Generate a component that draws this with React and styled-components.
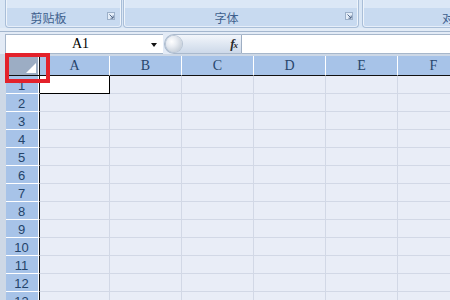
import React from 'react';
import styled, { createGlobalStyle } from 'styled-components';

const Global = createGlobalStyle`
  html, body { margin: 0; padding: 0; background: #cbd7e6; }
  #root { width: 450px; height: 300px; }
`;

const Root = styled.div`
  position: relative;
  width: 450px;
  height: 300px;
  overflow: hidden;
  background: #cdd8e6;
  display: flex;
  flex-direction: column;
`;

const Ribbon = styled.div`
  flex: none;
  display: flex;
  align-items: flex-start;
  height: 32px;
  box-sizing: border-box;
  padding-left: 5px;
  background: linear-gradient(#d9e6f5 0, #d9e6f5 28px, #e2ebf6 28px);
  border-bottom: 1px solid #a3b6ce;
`;

const Group = styled.div`
  flex: none;
  width: ${(p) => p.$w}px;
  margin-right: ${(p) => p.$gap || 0}px;
  height: 28px;
  box-sizing: border-box;
  border: 1px solid #a9bed8;
  border-top: none;
  border-radius: 0 0 4px 4px;
  background: linear-gradient(#dbe7f6 0, #dbe7f6 8px, #c8daf0 8px);
  box-shadow: inset 1px 0 #eef4fb, inset -1px 0 #eef4fb, inset 0 -1px #e6eef9;
  display: flex;
  flex-direction: column;
  justify-content: flex-end;
`;

const Band = styled.div`
  height: 19px;
  display: flex;
  align-items: center;
  padding-bottom: 1px;
  box-sizing: border-box;
`;

const GroupLabel = styled.div`
  flex: 1;
  text-align: ${(p) => p.$align || 'center'};
  padding-left: ${(p) => p.$pl || 0}px;
  padding-right: ${(p) => (p.$align === 'left' ? 0 : 16)}px;
  font: 12px/19px "Noto Sans CJK SC", "Noto Sans", sans-serif;
  color: #3e5f8d;
  white-space: nowrap;
  overflow: hidden;
`;

const LauncherIcon = styled.svg`
  flex: none;
  width: 8px;
  height: 8px;
  margin-right: ${(p) => p.$mr}px;
  margin-bottom: 3px;
`;

const Launcher = ({ mr }) => (
  <LauncherIcon $mr={mr} viewBox="0 0 8 8">
    <rect x="0.5" y="0.5" width="7" height="7" fill="#e4edf8" stroke="#9cb0c9" />
    <path d="M2.5 2.5L6 6" stroke="#53698a" strokeWidth="1" />
    <path d="M3.5 6.2H6.2V3.5" fill="none" stroke="#53698a" strokeWidth="1" />
  </LauncherIcon>
);

const FormulaBar = styled.div`
  flex: none;
  height: 22px;
  box-sizing: border-box;
  display: flex;
  align-items: flex-end;
  padding-left: 5px;
  background: #e3ebf6;
`;

const NameBox = styled.div`
  flex: none;
  width: 158px;
  height: 20px;
  box-sizing: border-box;
  background: #fff;
  border: 1px solid #a7b7cb;
  border-right: none;
  display: flex;
  align-items: center;
`;

const NameText = styled.div`
  flex: 1;
  text-align: center;
  padding-left: 4px;
  font: 14px "Liberation Serif", "DejaVu Serif", serif;
  color: #000;
`;

const DropArrow = styled.div`
  flex: none;
  width: 0;
  height: 0;
  border-left: 3px solid transparent;
  border-right: 3px solid transparent;
  border-top: 4px solid #111;
  margin-right: 6px;
  margin-top: 1px;
`;

const FxPill = styled.div`
  flex: none;
  width: 78px;
  height: 20px;
  box-sizing: border-box;
  margin-left: 1px;
  border: 1px solid #a9b9cd;
  border-right: 1px solid #9eaec3;
  border-radius: 10px 0 0 10px;
  background: linear-gradient(#f3f6fb, #dfe7f2 50%, #cdd9e9);
  display: flex;
  align-items: center;
  justify-content: space-between;
  padding: 0 4px 0 1px;
`;

const Knob = styled.div`
  width: 16px;
  height: 16px;
  border-radius: 50%;
  background: radial-gradient(circle at 35% 35%, #ffffff 0, #e8ecf2 35%, #b4bfcc 100%);
  box-shadow: 0 0 0 1px #b8c4d3;
`;

const Fx = styled.span`
  font: italic bold 13px "Liberation Serif", serif;
  color: #2a2a2a;
  letter-spacing: -1px;
  & > small {
    font-size: 9px;
  }
`;

const FormulaInput = styled.div`
  flex: 1;
  height: 20px;
  box-sizing: border-box;
  background: #fff;
  border-top: 1px solid #a7b7cb;
  border-bottom: 1px solid #a7b7cb;
`;

const Sheet = styled.div`
  flex: 1;
  margin-top: 2px;
  margin-left: 6px;
  display: flex;
  flex-direction: column;
  background: #e9edf7;
`;

const Row = styled.div`
  display: flex;
  flex: none;
`;

const Corner = styled.div`
  flex: none;
  width: 34px;
  height: 20px;
  box-sizing: border-box;
  background: #9cadc4;
  border-right: 1px solid #111;
  border-bottom: 1px solid #111;
  box-shadow: inset -1px 0 #fff;
  display: flex;
  justify-content: flex-end;
  align-items: flex-end;
  padding: 0 3px 2px 0;
`;

const Triangle = styled.div`
  width: 0;
  height: 0;
  border-left: 10px solid transparent;
  border-bottom: 10px solid #fff;
`;

const ColHeader = styled.div`
  flex: none;
  width: ${(p) => p.$w}px;
  height: 20px;
  box-sizing: border-box;
  background: #a7c3e8;
  border-right: 1px solid #fff;
  border-bottom: 1px solid #111;
  display: flex;
  align-items: flex-end;
  justify-content: center;
  padding-bottom: 1px;
  font: 14px/16px "Liberation Serif", "DejaVu Serif", serif;
  color: #27466c;
`;

const RowHeader = styled.div`
  flex: none;
  width: 34px;
  height: 18px;
  box-sizing: border-box;
  background: #a7c3e8;
  border-right: 1px solid #111;
  border-bottom: 1px solid #fff;
  box-shadow: inset -1px 0 #fff;
  display: flex;
  align-items: center;
  justify-content: center;
  padding: 2px 2px 0 0;
  font: 13px "Liberation Sans", Arial, sans-serif;
  color: #24446a;
`;

const Cell = styled.div`
  flex: none;
  width: ${(p) => p.$w}px;
  height: 18px;
  box-sizing: border-box;
  background: ${(p) => (p.$active ? '#fff' : '#e9edf7')};
  border-right: 1px solid ${(p) => (p.$active ? '#000' : '#d2d8e6')};
  border-bottom: 1px solid ${(p) => (p.$active ? '#000' : '#d2d8e6')};
`;

const Highlight = styled.div`
  position: absolute;
  left: 5px;
  top: 53px;
  width: 45px;
  height: 30px;
  box-sizing: border-box;
  border: 4px solid #e3222b;
`;

const columns = [
  { name: 'A', w: 70 },
  { name: 'B', w: 72 },
  { name: 'C', w: 72 },
  { name: 'D', w: 72 },
  { name: 'E', w: 72 },
  { name: 'F', w: 72 },
];

const rows = Array.from({ length: 14 }, (_, i) => i + 1);

export default function App() {
  return (
    <Root>
      <Global />
      <Ribbon>
        <Group $w={117} $gap={1}>
          <Band>
            <GroupLabel>剪贴板</GroupLabel>
            <Launcher mr={6} />
          </Band>
        </Group>
        <Group $w={236} $gap={3}>
          <Band>
            <GroupLabel>字体</GroupLabel>
            <Launcher mr={5} />
          </Band>
        </Group>
        <Group $w={240}>
          <Band>
            <GroupLabel $align="left" $pl={79}>对齐方式</GroupLabel>
          </Band>
        </Group>
      </Ribbon>
      <FormulaBar>
        <NameBox>
          <NameText>A1</NameText>
          <DropArrow />
        </NameBox>
        <FxPill>
          <Knob />
          <Fx>
            f<small>x</small>
          </Fx>
        </FxPill>
        <FormulaInput />
      </FormulaBar>
      <Sheet>
        <Row>
          <Corner>
            <Triangle />
          </Corner>
          {columns.map((c) => (
            <ColHeader key={c.name} $w={c.w}>
              {c.name}
            </ColHeader>
          ))}
        </Row>
        {rows.map((r) => (
          <Row key={r}>
            <RowHeader>{r}</RowHeader>
            {columns.map((c, ci) => (
              <Cell key={c.name} $w={c.w} $active={r === 1 && ci === 0} />
            ))}
          </Row>
        ))}
      </Sheet>
      <Highlight />
    </Root>
  );
}
